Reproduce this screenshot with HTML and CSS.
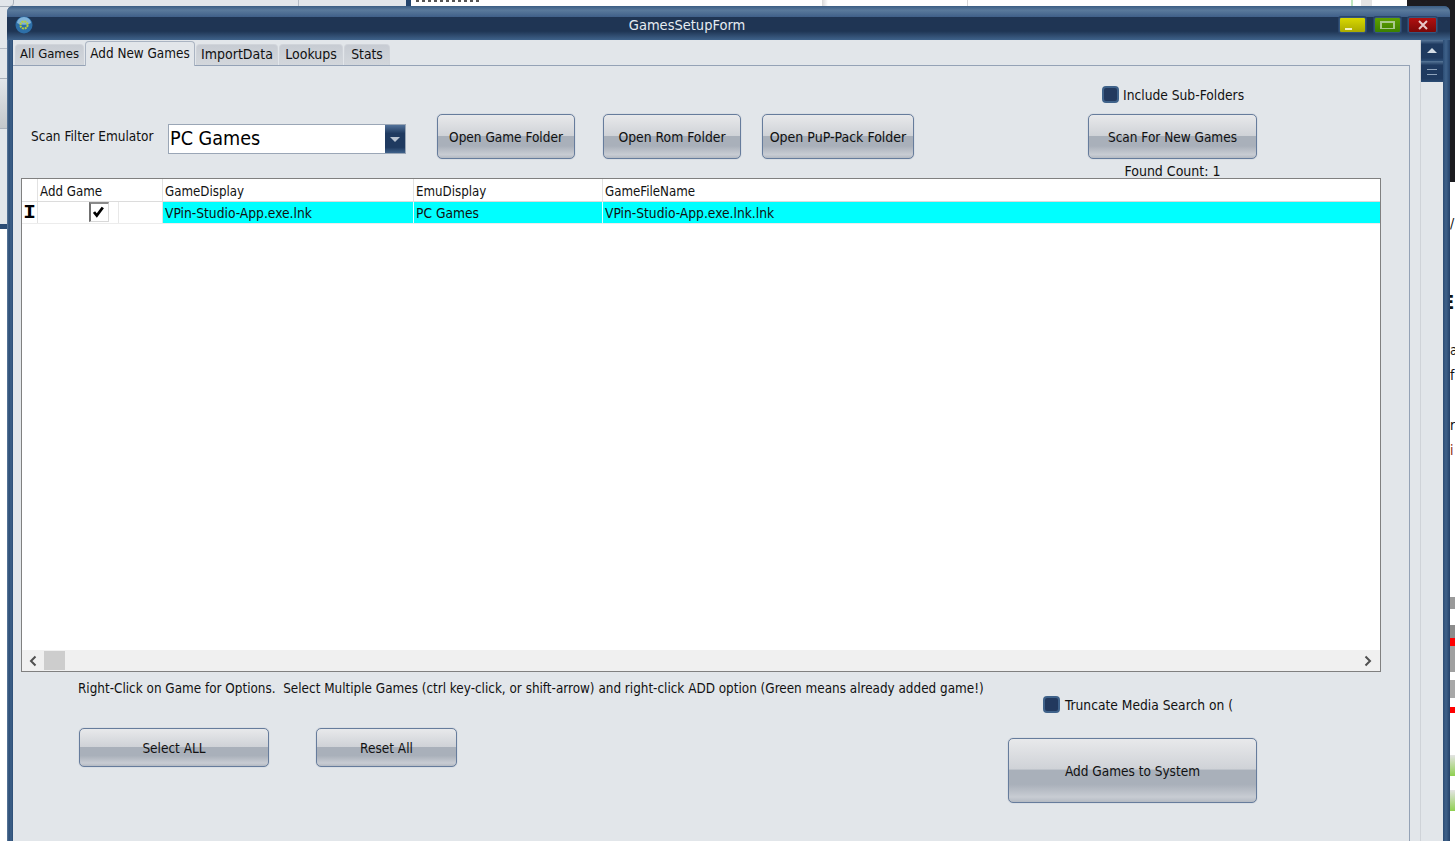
FILE: index.html
```html
<!DOCTYPE html>
<html lang="en">
<head>
    <meta charset="UTF-8">
    <title>GamesSetupForm</title>
    <link rel="stylesheet" href="styles.css">
</head>
<body>
    <div class="desktop">
        <!-- windows behind the form -->
        <div class="bg-top"></div>
        <div class="bg-top-text"></div>
        <div class="bg-top-dark"></div>
        <div class="bg-line bg-line-a"></div>
        <div class="bg-line bg-line-b"></div>
        <div class="bg-top-shade"></div>
        <div class="bg-top-green"></div>
        <div class="bg-top-grey"></div>
        <div class="bg-left-btn"></div>
        <div class="bg-left-line"></div>
        <div class="bg-left-band"></div>
        <div class="bg-left-blue"></div>
        <div class="bg-left-white"></div>
        <div class="bg-right-dark"></div>
        <div class="bg-right-white">
            <span class="frag frag-a">/</span>
            <span class="frag frag-b">E</span>
            <span class="frag frag-c">a</span>
            <span class="frag frag-d">f</span>
            <span class="frag frag-e">r</span>
            <span class="frag frag-f">i</span>
            <span class="side-block grey-one"></span>
            <span class="side-block grey-two"></span>
            <span class="side-block red-one"></span>
            <span class="side-block grey-three"></span>
            <span class="side-block grey-four"></span>
            <span class="side-block red-two"></span>
            <span class="side-block green-one"></span>
            <span class="side-block green-two"></span>
        </div>

        <div class="window">
            <div class="titlebar">
                <svg class="app-icon" width="18" height="18" viewBox="0 0 18 18">
                    <circle cx="9" cy="9" r="8.5" fill="#2d6fa8"/>
                    <path d="M2 7a7 6 0 0 1 14 0a9 5 0 0 1-14 0z" fill="#7fb2d8"/>
                    <circle cx="9" cy="9" r="3.6" fill="none" stroke="#b9cf3a" stroke-width="2" stroke-dasharray="2 .8"/>
                </svg>
                <div class="title">GamesSetupForm</div>
                <div class="win-btn win-min"><span class="min-mark"></span></div>
                <div class="win-btn win-max"><span class="max-mark"></span></div>
                <div class="win-btn win-close">
                    <svg width="12" height="10" viewBox="0 0 12 10"><path d="M2 1l8 8M10 1l-8 8" stroke="#e8c8c8" stroke-width="2"/></svg>
                </div>
            </div>

            <div class="client">
                <div class="tab-area">
                    <div class="tabs">
                        <div class="tab tab-all">All Games</div>
                        <div class="tab tab-add active">Add New Games</div>
                        <div class="tab tab-import">ImportData</div>
                        <div class="tab tab-lookups">Lookups</div>
                        <div class="tab tab-stats">Stats</div>
                    </div>

                    <div class="tab-page">
                        <div class="toolbar">
                            <div class="scan-left">
                                <div class="filter-label">Scan Filter Emulator</div>
                                <div class="combo">
                                    <div class="combo-text">PC Games</div>
                                    <div class="combo-btn"><span class="arrow-down"></span></div>
                                </div>
                                <button type="button" class="btn btn-game">Open Game Folder</button>
                                <button type="button" class="btn btn-rom">Open Rom Folder</button>
                                <button type="button" class="btn btn-pup">Open PuP-Pack Folder</button>
                            </div>
                            <div class="scan-right">
                                <label class="check-row check-sub"><span class="check"></span>Include Sub-Folders</label>
                                <button type="button" class="btn btn-scan">Scan For New Games</button>
                                <div class="found">Found Count: 1</div>
                            </div>
                        </div>

                        <div class="grid-box">
                            <div class="grid-body">
                                <div class="grid-row grid-head">
                                    <div class="cell cell-ind"></div>
                                    <div class="cell">Add Game</div>
                                    <div class="cell">GameDisplay</div>
                                    <div class="cell">EmuDisplay</div>
                                    <div class="cell cell-last">GameFileName</div>
                                </div>
                                <div class="grid-row grid-data">
                                    <div class="cell cell-ind"><span class="edit-cursor">I</span></div>
                                    <div class="cell cell-check">
                                        <span class="cb-box">
                                            <svg width="14" height="13" viewBox="0 0 14 13"><path d="M1 6l2.800 3.500 6-8" fill="none" stroke="#000" stroke-width="2.800"/></svg>
                                        </span>
                                    </div>
                                    <div class="cell cell-hi">VPin-Studio-App.exe.lnk</div>
                                    <div class="cell cell-hi">PC Games</div>
                                    <div class="cell cell-hi cell-last">VPin-Studio-App.exe.lnk.lnk</div>
                                </div>
                            </div>
                            <div class="hscroll">
                                <svg width="10" height="12" viewBox="0 0 10 12"><path d="M7.500 1.500L3 6l4.500 4.500" fill="none" stroke="#505050" stroke-width="2"/></svg>
                                <div class="hscroll-thumb"></div>
                                <svg class="hscroll-right" width="10" height="12" viewBox="0 0 10 12"><path d="M2.500 1.500L7 6l-4.500 4.500" fill="none" stroke="#505050" stroke-width="2"/></svg>
                            </div>
                        </div>

                        <div class="footer">
                            <div class="footer-left">
                                <div class="hint">Right-Click on Game for Options.&nbsp; Select Multiple Games (ctrl key-click, or shift-arrow) and right-click ADD option (Green means already added game!)</div>
                                <div class="footer-btns">
                                    <button type="button" class="btn btn-select">Select ALL</button>
                                    <button type="button" class="btn btn-reset">Reset All</button>
                                </div>
                            </div>
                            <div class="footer-right">
                                <label class="check-row check-trunc"><span class="check"></span>Truncate Media Search on (</label>
                                <button type="button" class="btn btn-add">Add Games to System</button>
                            </div>
                        </div>
                    </div>
                </div>

                <div class="vscroll">
                    <div class="vscroll-btn"><span class="arrow-up"></span></div>
                    <div class="vscroll-thumb"><span class="grip"></span></div>
                </div>
            </div>
        </div>
    </div>
</body>
</html>
```

FILE: styles.css
```css
/* page */
html, body {
    margin: 0;
    padding: 0;
    background-color: #fff;
}

.desktop {
    position: relative;
    width: 1455px;
    height: 841px;
    overflow: hidden;
    background-color: #e2e6ea;
    font-family: "DejaVu Sans Condensed", "DejaVu Sans", sans-serif;
    font-size: 13.5px;
    color: #111;
}

/* windows behind */
.bg-top {
    position: absolute;
    top: 0;
    left: 411px;
    width: 1000px;
    height: 8px;
    background-color: #fff;
}

.bg-top-text {
    position: absolute;
    top: 0;
    left: 416px;
    width: 64px;
    height: 2px;
    background: repeating-linear-gradient(90deg, #555 0, #555 3px, #fff 3px, #fff 6px);
}

.bg-top-dark {
    position: absolute;
    top: 0;
    left: 406px;
    width: 5px;
    height: 8px;
    background-color: #25456c;
}

.bg-line {
    position: absolute;
    top: 0;
    width: 1px;
    height: 8px;
    background-color: #b4bcc6;
}

.bg-line-a { left: 298px; }
.bg-line-b { left: 967px; background-color: #d8d8d8; }

.bg-top-shade {
    position: absolute;
    top: 0;
    left: 822px;
    width: 6px;
    height: 8px;
    background: linear-gradient(90deg, #d8d8d8, #fff);
}

.bg-top-green {
    position: absolute;
    top: 0;
    left: 1351px;
    width: 2px;
    height: 8px;
    background-color: #bfe6bf;
}

.bg-top-grey {
    position: absolute;
    top: 0;
    left: 1361px;
    width: 11px;
    height: 8px;
    background-color: #e4e4e4;
}

.bg-left-btn {
    position: absolute;
    top: -10px;
    left: -4px;
    width: 16px;
    height: 15px;
    border: 1px solid #a9b1bb;
    border-radius: 4px;
}

.bg-left-line {
    position: absolute;
    top: 48px;
    left: 0;
    width: 7px;
    height: 1px;
    background-color: #b4bcc6;
}

.bg-left-band {
    position: absolute;
    top: 78px;
    left: 0;
    width: 7px;
    height: 49px;
    background: linear-gradient(#e2e6ea, #c3c7cb);
    border-top: 1px solid #a9b1bb;
    border-bottom: 1px solid #a9b1bb;
}

.bg-left-blue {
    position: absolute;
    top: 224px;
    left: 0;
    width: 7px;
    height: 5px;
    background-color: #2c4d75;
}

.bg-left-white {
    position: absolute;
    top: 229px;
    left: 0;
    width: 7px;
    height: 612px;
    background-color: #fff;
}

.bg-right-dark {
    position: absolute;
    top: 0;
    left: 1407px;
    width: 48px;
    height: 182px;
    background-color: #1c1c20;
}

.bg-right-white {
    position: absolute;
    top: 182px;
    left: 1450px;
    width: 5px;
    height: 659px;
    overflow: hidden;
    background-color: #fff;
}

.frag {
    position: absolute;
    left: 0;
    font-size: 14px;
    line-height: 16px;
}

.frag-a { top: 33px; }
.frag-b { top: 108px; left: -8px; font-size: 20px; font-weight: bold; line-height: 24px; }
.frag-c { top: 160px; }
.frag-d { top: 185px; }
.frag-e { top: 235px; }
.frag-f { top: 260px; color: #8a2a10; }

.side-block {
    position: absolute;
    left: 0;
    width: 5px;
}

.grey-one { top: 415px; height: 12px; background-color: #9a9a9a; }
.grey-two { top: 443px; height: 13px; background-color: #8c8c8c; }
.red-one { top: 456px; height: 8px; background-color: #f00; }
.grey-three { top: 464px; height: 26px; background-color: #a0a0a0; }
.grey-four { top: 498px; height: 18px; background-color: #a8a8a8; }
.red-two { top: 525px; height: 6px; background-color: #f00; }
.green-one { top: 573px; height: 21px; background: linear-gradient(#e4e4e4, #8fd050); }
.green-two { top: 608px; height: 21px; background: linear-gradient(#e4e4e4, #8fd050); }

/* main window */
.window {
    position: absolute;
    top: 6px;
    left: 7px;
    width: 1443px;
    height: 860px;
    box-sizing: border-box;
    padding: 0 7px 0 6px;
    border-radius: 6px 6px 0 0;
    background: linear-gradient(90deg, #5f7d9f 0, #2c4d75 2px, #3f628a 4px, #2c4d75 6px, #2c4d75 1436px, #3f628a 1439px, #24426a 1443px);
    display: flex;
    flex-direction: column;
}

.titlebar {
    display: flex;
    align-items: center;
    flex: none;
    height: 34px;
    margin: 0 -7px 0 -6px;
    padding: 3px 13px 0 8px;
    box-sizing: border-box;
    border-radius: 6px 6px 0 0;
    background: linear-gradient(#3b5d83 0, #5a7a9c 12%, #41618a 31%, #1f3554 33%, #1f3554 74%, #3f628a 100%);
}

.app-icon {
    flex: none;
}

.title {
    flex: 1;
    text-align: center;
    color: #e6ecf2;
    font-size: 14.5px;
    padding-left: 2px;
}

.win-btn {
    display: flex;
    align-items: center;
    justify-content: center;
    flex: none;
    width: 25px;
    height: 14px;
    border: 1px solid #35567c;
    border-radius: 2px;
    box-shadow: 0 0 0 1px #2a456b;
}

.win-min {
    margin-right: 8px;
    background: linear-gradient(#d8d800 0, #aaaa00 100%);
    align-items: flex-end;
    justify-content: flex-start;
}

.min-mark {
    width: 7px;
    height: 2px;
    margin: 0 0 2px 5px;
    background-color: #f2f2c0;
}

.win-max {
    margin-right: 7px;
    background: linear-gradient(#5fa000 0, #3c8000 100%);
}

.max-mark {
    width: 11px;
    height: 5px;
    border: 2px solid #a9c98c;
    border-width: 2px 2px 1px;
}

.win-close {
    width: 27px;
    background: linear-gradient(#b01010 0, #7a0808 100%);
}

.client {
    flex: 1;
    display: flex;
    background-color: #e2e6ea;
}

/* tabs */
.tab-area {
    flex: none;
    width: 1397px;
}

.tabs {
    display: flex;
    align-items: flex-end;
    height: 25px;
    padding-left: 2px;
    box-sizing: border-box;
}

.tab {
    height: 21px;
    box-sizing: border-box;
    line-height: 18px;
    text-align: center;
    background: linear-gradient(#c7ccd3, #d3d7dc);
    border: 1px solid #d0d4da;
    border-bottom: 0;
    border-radius: 4px 4px 0 0;
    margin-right: 1px;
    white-space: nowrap;
}

.tab.active {
    height: 25px;
    line-height: 24px;
    background: #e2e6ea;
    border: 1px solid #aab4c2;
    border-bottom: 0;
    position: relative;
    margin-bottom: -1px;
    z-index: 1;
}

.tab-all { width: 69px; font-size: 13px; }
.tab-add { width: 110px; font-size: 13.4px; }
.tab-import { width: 82px; font-size: 14px; }
.tab-lookups { width: 64px; font-size: 14px; }
.tab-stats { width: 46px; margin-right: 0; font-size: 13.8px; }

.tab-page {
    border-top: 1px solid #94a2b6;
    border-right: 1px solid #94a2b6;
    padding-left: 8px;
    height: 790px;
    box-sizing: border-box;
}

/* top toolbar */
.toolbar {
    display: flex;
    height: 112px;
}

.scan-left {
    display: flex;
    align-items: flex-start;
    padding-top: 48px;
    width: 1067px;
    flex: none;
}

.filter-label {
    width: 137px;
    margin: 14px 0 0 10px;
    flex: none;
}

.combo {
    display: flex;
    width: 238px;
    height: 30px;
    margin-top: 10px;
    box-sizing: border-box;
    border: 1px solid #9aa6b6;
    background-color: #fff;
    flex: none;
}

.combo-text {
    flex: 1;
    font-size: 19.6px;
    line-height: 28px;
    padding-left: 1px;
    color: #000;
}

.combo-btn {
    display: flex;
    align-items: center;
    justify-content: center;
    width: 20px;
    background: linear-gradient(#52729a 0, #1f3a60 30%, #1f3a60 80%, #3f628a 100%);
}

.arrow-down {
    width: 0;
    height: 0;
    border-left: 5px solid transparent;
    border-right: 5px solid transparent;
    border-top: 5px solid #b9c4d2;
}

.btn {
    display: block;
    flex: none;
    padding: 0;
    box-sizing: border-box;
    border: 1px solid #667c9c;
    border-radius: 5px;
    font-family: inherit;
    font-size: 13.5px;
    color: #111;
    background: linear-gradient(#e8e9eb 0, #cfd2d7 48%, #a9b0ba 49%, #a9b0ba 72%, #c8ccd3 92%, #b4bac3 100%);
    box-shadow: 0 0 1px #8d99aa;
}

.btn-game { width: 138px; height: 45px; margin-left: 31px; }
.btn-rom { width: 138px; height: 45px; margin-left: 28px; font-size: 13.8px; }
.btn-pup { width: 152px; height: 45px; margin-left: 21px; font-size: 14px; }

.scan-right {
    display: flex;
    flex-direction: column;
    align-items: flex-start;
    padding-top: 20px;
}

.check-row {
    display: flex;
    align-items: center;
    white-space: nowrap;
    font-size: 13.7px;
}

.check {
    width: 17px;
    height: 17px;
    margin-right: 4px;
    box-sizing: border-box;
    border: 2px solid #3f628a;
    border-radius: 4px;
    background-color: #22395e;
    flex: none;
}

.check-sub {
    margin-left: 14px;
}

.btn-scan {
    width: 169px;
    height: 45px;
    margin-top: 11px;
}

.found {
    width: 169px;
    text-align: center;
    margin-top: 4px;
    line-height: 17px;
    font-size: 14px;
}

/* data grid */
.grid-box {
    display: flex;
    flex-direction: column;
    width: 1360px;
    height: 494px;
    box-sizing: border-box;
    border: 1px solid #808080;
    background-color: #fff;
}

.grid-body {
    flex: 1;
}

.grid-row {
    display: grid;
    grid-template-columns: 16px 125px 251px 189px 1fr;
    box-sizing: border-box;
}

.grid-head {
    height: 23px;
    border-bottom: 1px solid #dcdcdc;
    font-size: 13.2px;
}

.grid-head .cell {
    padding-top: 4px;
}

.grid-data {
    height: 22px;
    border-bottom: 1px solid #ececec;
    font-size: 13.7px;
}

.cell {
    box-sizing: border-box;
    padding: 3px 0 0 2px;
    border-right: 1px solid #e2e2e2;
    line-height: 18px;
    white-space: nowrap;
}

.cell-last {
    border-right: 0;
}

.cell-ind {
    padding: 0;
    text-align: center;
    overflow: hidden;
}

.edit-cursor {
    font-family: "Liberation Mono", monospace;
    font-weight: bold;
    font-size: 21px;
    line-height: 21px;
    color: #000;
}

.cell-check {
    padding: 0;
    display: flex;
}

.cb-box {
    display: flex;
    align-items: center;
    justify-content: center;
    width: 20px;
    height: 20px;
    margin-left: 51px;
    box-sizing: border-box;
    border: 1px solid #d8d8d8;
    border-left: 2px solid #707070;
    border-top: 2px solid #8a8a8a;
    background-color: #fff;
}

.cell-check::after {
    content: '';
    width: 1px;
    height: 21px;
    margin-left: 9px;
    background-color: #e8e8e8;
}

.cell-hi {
    background-color: #0ff;
    color: #111;
    border-right-color: #dff;
    padding-top: 2px;
}

.hscroll {
    display: flex;
    align-items: center;
    flex: none;
    height: 21px;
    padding: 0 7px 0 6px;
    background-color: #f0f0f0;
}

.hscroll-thumb {
    width: 21px;
    height: 19px;
    margin-left: 6px;
    background-color: #cdcdcd;
}

.hscroll-right {
    margin-left: auto;
}

/* bottom part */
.footer {
    display: flex;
}

.footer-left {
    width: 987px;
    flex: none;
    padding-left: 57px;
    box-sizing: border-box;
}

.hint {
    margin-top: 8px;
    line-height: 17px;
    white-space: nowrap;
    font-size: 13.38px;
}

.footer-btns {
    display: flex;
    margin-top: 31px;
    margin-left: 1px;
}

.btn-select { width: 190px; height: 39px; }
.btn-reset { width: 141px; height: 39px; margin-left: 47px; }

.footer-right {
    display: flex;
    flex-direction: column;
    align-items: flex-start;
}

.check-trunc {
    margin: 24px 0 0 35px;
}

.check-trunc .check {
    margin-right: 5px;
}

.btn-add {
    width: 249px;
    height: 65px;
    margin-top: 25px;
}

/* window scrollbar */
.vscroll {
    width: 22px;
    margin-left: 10px;
    border-left: 1px solid #cfd3d8;
}

.vscroll-btn, .vscroll-thumb {
    display: flex;
    align-items: center;
    justify-content: center;
    height: 21px;
    background: linear-gradient(#587799 0, #1f3a60 20%, #1f3a60 85%, #2c4d75 100%);
}

.arrow-up {
    width: 0;
    height: 0;
    border-left: 5px solid transparent;
    border-right: 5px solid transparent;
    border-bottom: 5px solid #d5dde6;
}

.grip {
    width: 10px;
    height: 4px;
    border-top: 1px solid #8fa3bb;
    border-bottom: 1px solid #8fa3bb;
}
```
